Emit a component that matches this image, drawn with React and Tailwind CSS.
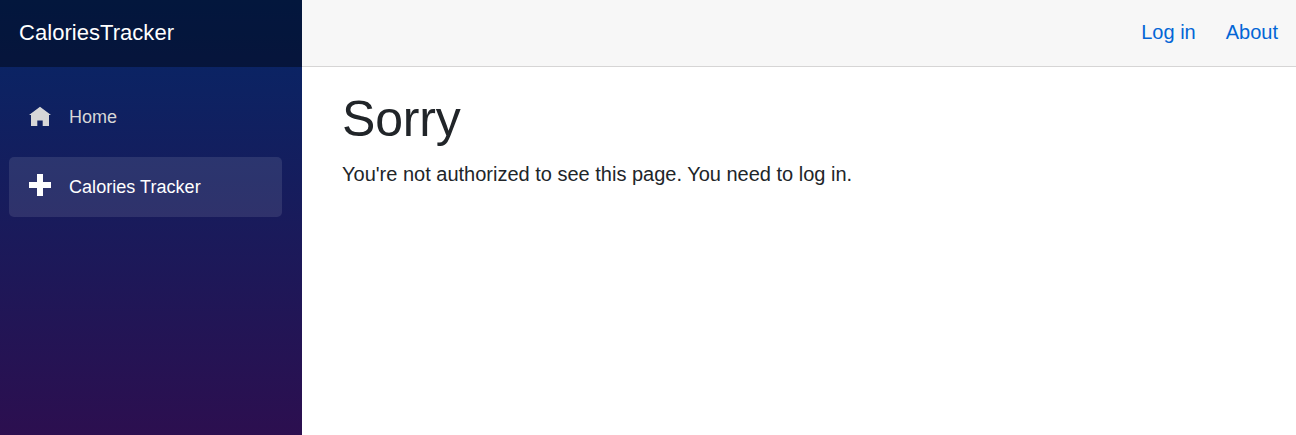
export default function App() {
  return (
    <div className="flex h-[435px] overflow-hidden bg-white font-['Liberation_Sans',Arial,sans-serif] text-xl text-[#212529]">
      <aside className="h-screen w-[302px] shrink-0 bg-[linear-gradient(180deg,#052767_0px,#3a0647_592px)]">
        <div className="flex h-[67px] items-center bg-black/40 pl-[19px] text-[22px] tracking-[0.04px] text-white">CaloriesTracker</div>
        <nav className="flex flex-col gap-[10px] pt-5 pr-5 pl-[9px] text-[18px]">
          <a className="flex h-[60px] items-center pl-5 text-[#d7d7d7]">
            <svg className="h-[22px] w-[22px]" viewBox="0 0 22 22" fill="currentColor"><path d="M11 0.8L0 9H2V20H8.3V14.5H13.7V20H20V9H22L11 0.8Z" /></svg>
            <span className="mt-[2px] ml-[18px]">Home</span>
          </a>
          <a className="flex h-[60px] items-center rounded-[5px] bg-white/10 pl-5 text-white">
            <svg className="mb-1 h-[22px] w-[22px]" viewBox="0 0 22 22" fill="currentColor"><path d="M8 0V8H0V14H8V22H14V14H22V8H14V0H8Z" /></svg>
            <span className="mt-[2px] ml-[18px] tracking-[0.04px]">Calories Tracker</span>
          </a>
        </nav>
      </aside>
      <div className="flex-1">
        <header className="flex h-[67px] items-center justify-end gap-[30px] border-b border-[#d6d5d5] bg-[#f7f7f7] pr-[18px] pb-[2px] text-[#0366d6]">
          <a>Log in</a>
          <a>About</a>
        </header>
        <main className="px-10 pt-[22px]">
          <h1 className="mb-[10px] text-[50px] leading-[60px] tracking-[-0.2px]">Sorry</h1>
          <p className="leading-[30px]">You're not authorized to see this page. You need to log in.</p>
        </main>
      </div>
    </div>
  );
}
